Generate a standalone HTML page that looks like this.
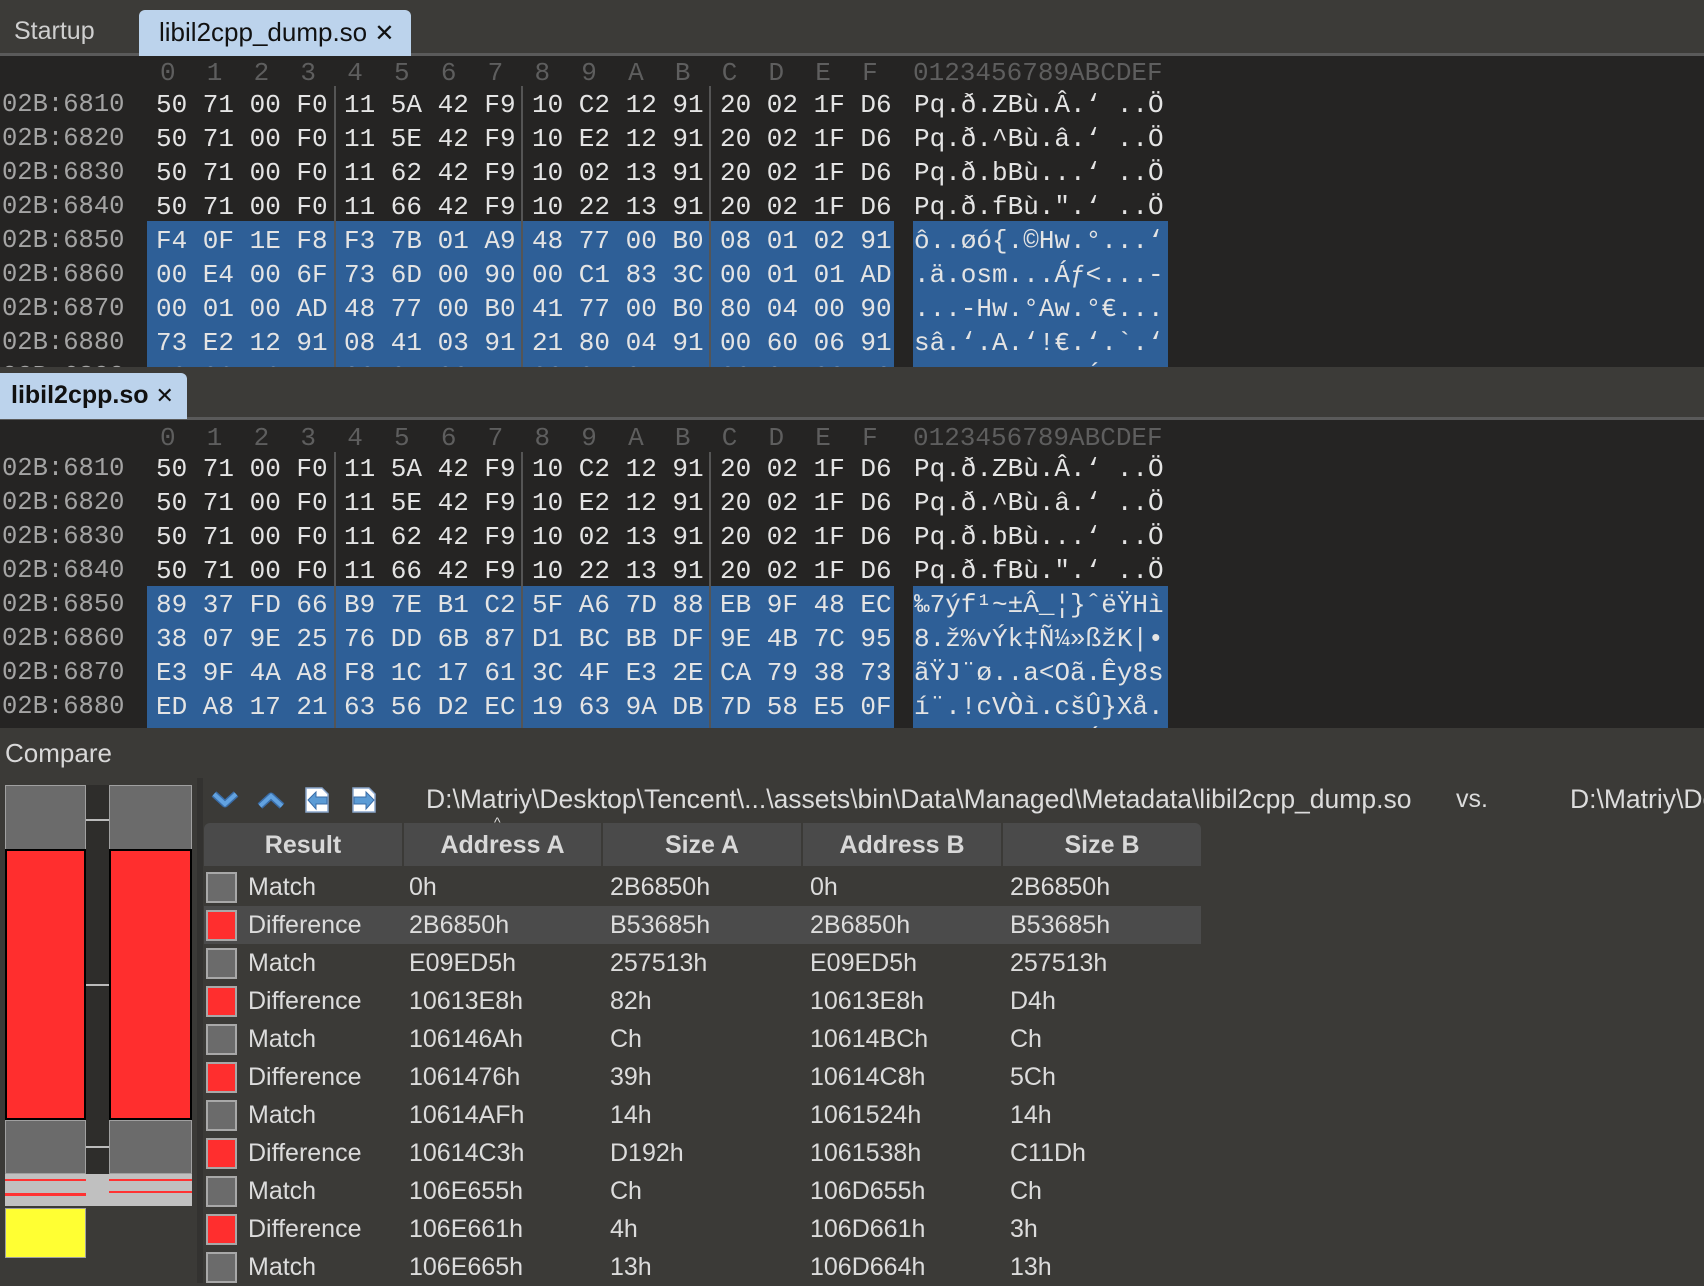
<!DOCTYPE html>
<html><head><meta charset="utf-8"><style>
*{margin:0;padding:0;box-sizing:border-box}
body{width:1704px;height:1283px;overflow:hidden;background:#3b3a37;position:relative;font-family:"Liberation Sans","DejaVu Sans",sans-serif;color:#dcdcdc}
.a{position:absolute}
.pane{position:absolute;left:0;width:1704px;background:#252423;overflow:hidden}
.m{font-family:"Liberation Mono","DejaVu Sans Mono",monospace;font-size:26px;white-space:pre;line-height:34px;position:absolute;color:#e4e4e4}
.ad{color:#a4a4a4;left:2px;font-size:25.5px}
.hd{color:#5e5e5e}
.sel{position:absolute;background:#2e5f97}
.sep{position:absolute;width:2px;background:#555}
.tr{position:absolute;left:204px;width:997px;height:38px;line-height:38px;font-size:25px;color:#dcdcdc}
.tr span{position:absolute}
.sq{position:absolute;left:2px;top:4px;width:31px;height:31px;border:2px solid #a8a8a8;background:#6b6b6b}
.sq.d{background:#ff2e2e}
</style></head><body>

<div class="a" style="left:0;top:0;width:1704px;height:54px;background:#3c3b38"></div>
<div class="a" style="left:0;top:53px;width:1704px;height:3px;background:#5a5a5a"></div>
<div class="a" style="left:14px;top:17px;font-size:25px;color:#cfcfcf">Startup</div>
<div class="a" style="left:139px;top:10px;width:272px;height:46px;background:#bcd3ec;border-radius:6px 6px 0 0"></div>
<div class="a" style="left:159px;top:17px;font-size:26px;color:#111">libil2cpp_dump.so <b style="font-size:24px">✕</b></div>

<div class="pane" style="top:56px;height:311px">
 <div class="sel" style="left:147px;top:165px;width:747px;height:160px"></div>
 <div class="sel" style="left:913px;top:165px;width:255px;height:160px"></div>
 <div class="sep" style="left:334px;top:30px;height:290px"></div>
 <div class="sep" style="left:521px;top:30px;height:290px"></div>
 <div class="sep" style="left:709px;top:30px;height:290px"></div>
 <div class="m hd" style="left:160px;top:0">0  1  2  3  4  5  6  7  8  9  A  B  C  D  E  F</div>
 <div class="m hd" style="left:913px;top:0">0123456789ABCDEF</div>
 <div class="m ad" style="top:32px">02B:6810<br>02B:6820<br>02B:6830<br>02B:6840<br>02B:6850<br>02B:6860<br>02B:6870<br>02B:6880<br>02B:6890</div>
 <div class="m" style="left:156px;top:32px">50 71 00 F0<br>50 71 00 F0<br>50 71 00 F0<br>50 71 00 F0<br>F4 0F 1E F8<br>00 E4 00 6F<br>00 01 00 AD<br>73 E2 12 91<br>70 02 12 11</div>
 <div class="m" style="left:344px;top:32px">11 5A 42 F9<br>11 5E 42 F9<br>11 62 42 F9<br>11 66 42 F9<br>F3 7B 01 A9<br>73 6D 00 90<br>48 77 00 B0<br>08 41 03 91<br>00 01 00 45</div>
 <div class="m" style="left:532px;top:32px">10 C2 12 91<br>10 E2 12 91<br>10 02 13 91<br>10 22 13 91<br>48 77 00 B0<br>00 C1 83 3C<br>41 77 00 B0<br>21 80 04 91<br>00 01 04 45</div>
 <div class="m" style="left:720px;top:32px">20 02 1F D6<br>20 02 1F D6<br>20 02 1F D6<br>20 02 1F D6<br>08 01 02 91<br>00 01 01 AD<br>80 04 00 90<br>00 60 06 91<br>00 01 00 50</div>
 <div class="m" style="left:914px;top:32px">Pq.ð.ZBù.Â.‘ ..Ö<br>Pq.ð.^Bù.â.‘ ..Ö<br>Pq.ð.bBù...‘ ..Ö<br>Pq.ð.fBù.".‘ ..Ö<br>ô..øó{.©Hw.°...‘<br>.ä.osm...Áƒ<...-<br>...-Hw.°Aw.°€...<br>sâ.‘.A.‘!€.‘.`.‘<br>p..........Á..P.</div>
</div>

<div class="a" style="left:0;top:367px;width:1704px;height:52px;background:#3c3b38"></div>
<div class="a" style="left:0;top:417px;width:1704px;height:3px;background:#5a5a5a"></div>
<div class="a" style="left:0;top:373px;width:187px;height:46px;background:#bcd3ec;border-radius:0 6px 0 0"></div>
<div class="a" style="left:11px;top:381px;font-size:25px;font-weight:bold;color:#111">libil2cpp.so <span style="font-size:22px">✕</span></div>

<div class="pane" style="top:420px;height:308px">
 <div class="sel" style="left:147px;top:166px;width:747px;height:150px"></div>
 <div class="sel" style="left:913px;top:166px;width:255px;height:150px"></div>
 <div class="sep" style="left:334px;top:32px;height:290px"></div>
 <div class="sep" style="left:521px;top:32px;height:290px"></div>
 <div class="sep" style="left:709px;top:32px;height:290px"></div>
 <div class="m hd" style="left:160px;top:1px">0  1  2  3  4  5  6  7  8  9  A  B  C  D  E  F</div>
 <div class="m hd" style="left:913px;top:1px">0123456789ABCDEF</div>
 <div class="m ad" style="top:32px">02B:6810<br>02B:6820<br>02B:6830<br>02B:6840<br>02B:6850<br>02B:6860<br>02B:6870<br>02B:6880<br>02B:6890</div>
 <div class="m" style="left:156px;top:32px">50 71 00 F0<br>50 71 00 F0<br>50 71 00 F0<br>50 71 00 F0<br>89 37 FD 66<br>38 07 9E 25<br>E3 9F 4A A8<br>ED A8 17 21<br>70 02 12 11</div>
 <div class="m" style="left:344px;top:32px">11 5A 42 F9<br>11 5E 42 F9<br>11 62 42 F9<br>11 66 42 F9<br>B9 7E B1 C2<br>76 DD 6B 87<br>F8 1C 17 61<br>63 56 D2 EC<br>00 01 00 45</div>
 <div class="m" style="left:532px;top:32px">10 C2 12 91<br>10 E2 12 91<br>10 02 13 91<br>10 22 13 91<br>5F A6 7D 88<br>D1 BC BB DF<br>3C 4F E3 2E<br>19 63 9A DB<br>00 01 04 45</div>
 <div class="m" style="left:720px;top:32px">20 02 1F D6<br>20 02 1F D6<br>20 02 1F D6<br>20 02 1F D6<br>EB 9F 48 EC<br>9E 4B 7C 95<br>CA 79 38 73<br>7D 58 E5 0F<br>00 01 00 50</div>
 <div class="m" style="left:914px;top:32px">Pq.ð.ZBù.Â.‘ ..Ö<br>Pq.ð.^Bù.â.‘ ..Ö<br>Pq.ð.bBù...‘ ..Ö<br>Pq.ð.fBù.".‘ ..Ö<br>‰7ýf¹~±Â_¦}ˆëŸHì<br>8.ž%vÝk‡Ñ¼»ßžK|•<br>ãŸJ¨ø..a&lt;Oã.Êy8s<br>í¨.!cVÒì.cšÛ}Xå.<br>p..........Á..P.</div>
</div>

<div class="a" style="left:5px;top:738px;font-size:26px;color:#d8d8d8">Compare</div>
<div class="a" style="left:197px;top:778px;width:6px;height:505px;background:#333230"></div>

<div class="a" style="left:86px;top:785px;width:23px;height:421px;background:#2e2d2b"></div>
<div class="a" style="left:86px;top:819px;width:23px;height:2px;background:#bbb"></div>
<div class="a" style="left:86px;top:984px;width:23px;height:2px;background:#bbb"></div>
<div class="a" style="left:86px;top:1146px;width:23px;height:2px;background:#bbb"></div>
<div class="a" style="left:5px;top:785px;width:81px;height:65px;background:#6b6b6b;border:1px solid #a0a0a0"></div>
<div class="a" style="left:109px;top:785px;width:83px;height:65px;background:#6b6b6b;border:1px solid #a0a0a0"></div>
<div class="a" style="left:5px;top:849px;width:81px;height:271px;background:#ff2e2e;border:2px solid #000"></div>
<div class="a" style="left:109px;top:849px;width:83px;height:271px;background:#ff2e2e;border:2px solid #000"></div>
<div class="a" style="left:5px;top:1120px;width:81px;height:54px;background:#6b6b6b;border:1px solid #a0a0a0"></div>
<div class="a" style="left:109px;top:1120px;width:83px;height:54px;background:#6b6b6b;border:1px solid #a0a0a0"></div>
<div class="a" style="left:5px;top:1174px;width:187px;height:32px;background:#c0c0c0"></div>
<div class="a" style="left:5px;top:1179px;width:81px;height:2px;background:#ff3333"></div>
<div class="a" style="left:5px;top:1193px;width:81px;height:3px;background:#ff3333"></div>
<div class="a" style="left:109px;top:1179px;width:83px;height:2px;background:#ff3333"></div>
<div class="a" style="left:109px;top:1191px;width:83px;height:2px;background:#ff3333"></div>
<div class="a" style="left:5px;top:1208px;width:81px;height:50px;background:#ffff33;border:1px solid #a0a0a0"></div>

<svg class="a" style="left:210px;top:785px" width="170" height="30" viewBox="0 0 170 30">
 <path d="M4 9 L15 19 L26 9" fill="none" stroke="#3a6da8" stroke-width="7" stroke-linejoin="round"/>
 <path d="M4 9 L15 19 L26 9" fill="none" stroke="#62a2e0" stroke-width="4"/>
 <path d="M50 21 L61 11 L72 21" fill="none" stroke="#3a6da8" stroke-width="7" stroke-linejoin="round"/>
 <path d="M50 21 L61 11 L72 21" fill="none" stroke="#62a2e0" stroke-width="4"/>
 <path d="M96 3 H112 L118 9 V27 H96 Z" fill="#fff" stroke="#8aa6cc" stroke-width="1.5"/>
 <path d="M98 15 L106 7 V12 H117 V19 H106 V24 Z" fill="#5b9bd5" stroke="#3a6da8"/>
 <path d="M143 3 H159 L165 9 V27 H143 Z" fill="#fff" stroke="#8aa6cc" stroke-width="1.5"/>
 <path d="M164 15 L156 7 V12 H144 V19 H156 V24 Z" fill="#5b9bd5" stroke="#3a6da8"/>
</svg>
<div class="a" style="left:426px;top:784px;font-size:26.5px;color:#dcdcdc;white-space:nowrap">D:\Matriy\Desktop\Tencent\...\assets\bin\Data\Managed\Metadata\libil2cpp_dump.so</div>
<div class="a" style="left:1456px;top:785px;font-size:25px;color:#dcdcdc">vs.</div>
<div class="a" style="left:1570px;top:784px;font-size:26.5px;color:#dcdcdc;white-space:nowrap">D:\Matriy\Desktop</div>

<div class="a" style="left:204px;top:823px;width:997px;height:43px;background:#4a4a4a;border-radius:6px 6px 0 0"></div>
<div class="a" style="left:402px;top:823px;width:2px;height:43px;background:#3b3a37"></div>
<div class="a" style="left:601px;top:823px;width:2px;height:43px;background:#3b3a37"></div>
<div class="a" style="left:801px;top:823px;width:2px;height:43px;background:#3b3a37"></div>
<div class="a" style="left:1001px;top:823px;width:2px;height:43px;background:#3b3a37"></div>
<div class="a" style="left:204px;top:831px;width:198px;text-align:center;font-size:25px;font-weight:bold;color:#d8d8d8">Result</div>
<div class="a" style="left:404px;top:831px;width:197px;text-align:center;font-size:25px;font-weight:bold;color:#d8d8d8">Address A</div>
<div class="a" style="left:494px;top:814px;font-size:14px;color:#ddd">^</div>
<div class="a" style="left:603px;top:831px;width:198px;text-align:center;font-size:25px;font-weight:bold;color:#d8d8d8">Size A</div>
<div class="a" style="left:803px;top:831px;width:198px;text-align:center;font-size:25px;font-weight:bold;color:#d8d8d8">Address B</div>
<div class="a" style="left:1003px;top:831px;width:198px;text-align:center;font-size:25px;font-weight:bold;color:#d8d8d8">Size B</div>

<div class="tr" style="top:868px"><i class="sq"></i><span style="left:44px">Match</span><span style="left:205px">0h</span><span style="left:406px">2B6850h</span><span style="left:606px">0h</span><span style="left:806px">2B6850h</span></div>
<div class="tr" style="top:906px;background:#4b4b4b"><i class="sq d"></i><span style="left:44px">Difference</span><span style="left:205px">2B6850h</span><span style="left:406px">B53685h</span><span style="left:606px">2B6850h</span><span style="left:806px">B53685h</span></div>
<div class="tr" style="top:944px"><i class="sq"></i><span style="left:44px">Match</span><span style="left:205px">E09ED5h</span><span style="left:406px">257513h</span><span style="left:606px">E09ED5h</span><span style="left:806px">257513h</span></div>
<div class="tr" style="top:982px"><i class="sq d"></i><span style="left:44px">Difference</span><span style="left:205px">10613E8h</span><span style="left:406px">82h</span><span style="left:606px">10613E8h</span><span style="left:806px">D4h</span></div>
<div class="tr" style="top:1020px"><i class="sq"></i><span style="left:44px">Match</span><span style="left:205px">106146Ah</span><span style="left:406px">Ch</span><span style="left:606px">10614BCh</span><span style="left:806px">Ch</span></div>
<div class="tr" style="top:1058px"><i class="sq d"></i><span style="left:44px">Difference</span><span style="left:205px">1061476h</span><span style="left:406px">39h</span><span style="left:606px">10614C8h</span><span style="left:806px">5Ch</span></div>
<div class="tr" style="top:1096px"><i class="sq"></i><span style="left:44px">Match</span><span style="left:205px">10614AFh</span><span style="left:406px">14h</span><span style="left:606px">1061524h</span><span style="left:806px">14h</span></div>
<div class="tr" style="top:1134px"><i class="sq d"></i><span style="left:44px">Difference</span><span style="left:205px">10614C3h</span><span style="left:406px">D192h</span><span style="left:606px">1061538h</span><span style="left:806px">C11Dh</span></div>
<div class="tr" style="top:1172px"><i class="sq"></i><span style="left:44px">Match</span><span style="left:205px">106E655h</span><span style="left:406px">Ch</span><span style="left:606px">106D655h</span><span style="left:806px">Ch</span></div>
<div class="tr" style="top:1210px"><i class="sq d"></i><span style="left:44px">Difference</span><span style="left:205px">106E661h</span><span style="left:406px">4h</span><span style="left:606px">106D661h</span><span style="left:806px">3h</span></div>
<div class="tr" style="top:1248px"><i class="sq"></i><span style="left:44px">Match</span><span style="left:205px">106E665h</span><span style="left:406px">13h</span><span style="left:606px">106D664h</span><span style="left:806px">13h</span></div>
</body></html>
